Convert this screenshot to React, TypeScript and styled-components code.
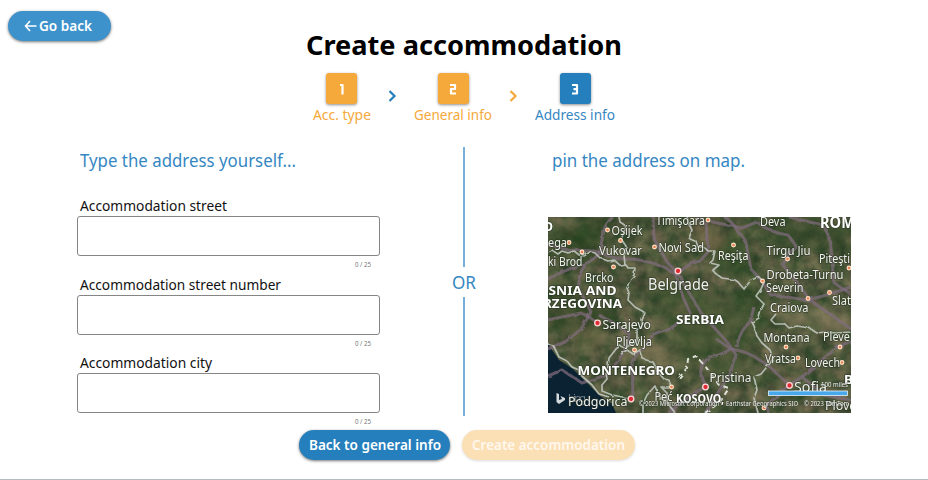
import React from 'react';
import styled, { createGlobalStyle } from 'styled-components';

const Global = createGlobalStyle`
  *{box-sizing:border-box}
  body{margin:0;background:#fff;font-family:"Noto Sans","Open Sans",sans-serif;overflow:hidden}
`;
const Page = styled.div`
  height:480px;display:flex;flex-direction:column;border-bottom:1px solid #b4bcc0;overflow:hidden;
`;
const TopBar = styled.div`height:28px;padding:11px 0 0 8px;flex:none;`;
const Pill = styled.button<{ $w: number; $bg: string; $fg?: string; $soft?: boolean }>`
  display:flex;align-items:center;justify-content:center;gap:2px;
  width:${p => p.$w}px;height:30px;border:0;border-radius:15px;padding:0;flex:none;
  background:${p => p.$bg};color:${p => p.$fg ?? '#fff'};
  font:600 13.5px "Noto Sans",sans-serif;white-space:nowrap;
  box-shadow:0 1px 3px rgba(0,0,0,${p => (p.$soft ? 0.14 : 0.55)});
`;
const BackContent = styled.span`display:flex;align-items:center;gap:2px;padding-right:4px;`;
const Fit = styled.svg<{ $w: number; $h: number }>`
  display:block;flex:none;width:${p => p.$w}px;height:${p => p.$h}px;overflow:visible;
`;
const Title = styled.h1`margin:0;height:34px;display:flex;justify-content:center;flex:none;`;
const Steps = styled.div`display:flex;height:52px;margin:11px 0 0 312px;flex:none;`;
const Step = styled.div<{ $w: number }>`
  width:${p => p.$w}px;display:flex;flex-direction:column;align-items:center;gap:1px;
`;
const StepBox = styled.div<{ $c: string }>`
  width:31px;height:31px;border-radius:3px;background:${p => p.$c};flex:none;
  display:flex;align-items:center;justify-content:center;padding-top:1px;
  box-shadow:0 1px 3px rgba(0,0,0,.45);
`;
const Arrow = styled.div<{ $w: number }>`
  width:${p => p.$w}px;height:45px;display:flex;align-items:center;justify-content:center;
`;
const Content = styled.main`display:flex;height:269px;margin-top:22px;flex:none;`;
const Form = styled.section`width:380px;padding-left:77px;`;
const Heading = styled.h2`margin:0;padding-left:3px;height:49px;`;
const Field = styled.div`height:78.7px;display:flex;flex-direction:column;`;
const Label = styled.label`height:20px;padding-left:3px;`;
const Input = styled.input`
  width:303px;height:40px;border:1px solid #858585;border-radius:3px;background:#fff;flex:none;
`;
const Counter = styled.span`align-self:flex-end;margin:4px 9px 0 0;`;
const Divider = styled.div`
  width:168px;display:flex;flex-direction:column;align-items:center;
`;
const Line = styled.i<{ $h: number }>`width:2px;height:${p => p.$h}px;background:#75aed8;flex:none;`;
const Or = styled.div`height:30px;display:flex;align-items:center;padding-top:2px;`;
const MapSide = styled.section`width:303px;`;
const MapHeading = styled.h2`margin:0;padding-left:4px;height:70px;`;
const Actions = styled.footer`display:flex;gap:12px;margin:14px 0 0 299px;`;

type LineProps = { t: string; w: number; h: number; base: number; size: number; color: string; weight?: number };
/* A single line of text fitted to a fixed advance width. */
const TextLine = ({ t, w, h, base, size, color, weight = 400 }: LineProps) => (
  <Fit $w={w} $h={h}>
    <text x="0" y={base} fontSize={size} fontWeight={weight} fill={color} textLength={w} lengthAdjust="spacingAndGlyphs">{t}</text>
  </Fit>
);

const blue = '#267fbd';
const textBlue = '#3587c2';
const orange = '#f5a93b';

type Place = [string, number, number, number, number, boolean?];
const places: Place[] = [
  ['Osijek', 63.5, 18, 31, 12], ['ega', 0, 30, 19, 12], ['Vukovar', 51, 37.5, 43, 12], ['ki Brod', 0, 48.5, 34.5, 12],
  ['Brcko', 37, 64.5, 28.5, 12], ['Timişoara', 108, 7.5, 49, 12], ['Novi Sad', 110.5, 35, 45.5, 12], ['Reşiţa', 170, 42.5, 30.5, 12],
  ['Belgrade', 100, 72.5, 61, 15.5], ['Deva', 212, 8.5, 25.5, 12], ['Tirgu Jiu', 218.5, 37.5, 44, 12], ['Piteşti', 271, 46, 31, 12],
  ['Drobeta-Turnu', 218.5, 62, 77, 12], ['Severin', 218, 75, 37.5, 12], ['Craiova', 222, 95, 38.5, 12], ['Slat', 284, 88, 19, 12],
  ['Sarajevo', 54.5, 111.5, 48.5, 12.5], ['Pljevlja', 68, 128.5, 36, 12], ['Podgorica', 20, 188.5, 59.5, 12.5], ['Peć', 106.5, 184, 18, 12.5],
  ['Montana', 215.5, 125, 46, 12], ['Pleve', 275, 124, 27, 12], ['Vratsa', 217, 146, 31, 12], ['Lovech', 257, 150, 35, 12],
  ['Pristina', 161.5, 165, 42, 12.5], ['Sofia', 246, 174.5, 33, 15], ['Plovd', 277, 193, 32, 12.5],
  ['D', -4, 14, 9, 13, true], ['SNIA AND', 0.5, 77.5, 68, 12.5, true], ['RZEGOVINA', -5, 91, 79, 12.5, true],
  ['ROM', 272, 11, 35, 15.5, true], ['SERBIA', 128, 106.5, 48, 12.5, true], ['MONTENEGRO', 29.5, 158, 97.5, 12.5, true],
  ['KOSOVO,', 128, 185.5, 48, 12, true], ['B', 296, 166.5, 9, 13, true],
];
const towns = [[59.5, 13], [72.5, 23.5], [21, 25.5], [34, 35], [65.5, 50], [106.5, 30], [160, 3], [185.5, 28], [239.5, 42], [301, 51], [214.5, 64], [260, 81.5], [281.5, 75.5], [86.5, 133], [123.5, 170], [238, 130], [292, 130], [250, 141], [294, 145.5], [216, 191]];
const cities = [[130, 54], [49.5, 106], [83, 182], [157.5, 170], [241.5, 168.5]];
const roads = [
  'M0 27L20 33L46 34L70 42Q85 41 101 45T122 54L133 60Q136 70 142 77L151 92Q156 102 164 108L180 126L188 138Q184 147 183 155L174 169L157 196',
  'M65 0Q57 7 56 14L51 37Q42 46 33 48T0 62', 'M105 0L106 22Q114 36 119 45L130 57Q140 46 152 44L160 35L158 7L149 0',
  'M176 0Q187 6 190 15Q199 22 199 32L203 52L213 63L223 78Q238 80 260 83Q281 78 303 70', 'M160 4L194 11L209 5Q222 16 240 18L248 29Q238 39 235 48L247 63L262 83L303 112',
  'M241 0L274 8Q283 17 283 32L286 66L303 77', 'M37 48Q29 59 31 72L43 95L33 112Q24 120 17 125L0 132', 'M51 98L67 107L81 117Q80 126 77 133L69 145Q64 153 58 158L34 166L14 153L0 159',
  'M183 132Q196 134 205 139T222 150L241 168L254 160Q266 149 275 142L290 130L303 124', 'M183 132Q171 139 161 140Q151 149 153 159L158 169L141 180L120 196',
  'M254 160L276 178L303 183', 'M241 168L218 189L220 196', 'M127 55Q131 68 135 80L142 96L126 109L106 117L94 133Q83 140 84 149L85 180',
  'M183 132L168 122M188 130Q193 112 202 105L206 90', 'M50 105L33 96L0 103',
];
const borders = [
  'M0 36L5 34L10 37L14 34L20 36L26 34L31 38L36 39L42 35L47 36L52 41L60 44L66 43L73 49L78 48L80 51L87 51L86 58L81 65L79 71L81 76L80 83L87 90L96 95L93 102L94 109L89 115L89 124L77 131L72 129L68 132L61 141L60 149L58 155L59 162L54 168L54 174L64 178L80 181',
  'M71 0L72 5L78 9L76 15L73 22L78 29L76 38L77 48', 'M139 0L141 7L144 13L141 21L148 24L150 30L156 30L160 34L167 34L165 43L162 46L171 48L165 53L167 56L174 61L181 62L187 63L190 65L196 72L203 63L211 60L216 65L213 72L208 79L216 87L213 93L211 101L204 105L206 109L209 119L214 126L222 133L225 141L223 145L213 157L206 160L209 173L206 181L210 196',
  'M0 127L5 128L11 140L19 144L24 150L31 153L34 159L44 168L51 177L61 180', 'M228 97L223 103L227 107L237 107L241 111L249 109L261 111L269 116L277 115L288 116L303 115',
  'M73 137L79 133L85 137L92 133L95 142L105 145L110 155L116 162L121 163L123 170L113 170L119 176L119 185L127 196', 'M95 196L95 187L99 178L107 169L112 182L120 182',
];

const SatelliteMap = () => (
  <Fit $w={303} $h={196} viewBox="0 0 303 196">
    <defs>
      <clipPath id="frame"><rect width="303" height="196" /></clipPath>
      <filter id="terrain" x="0" y="0" width="100%" height="100%" colorInterpolationFilters="sRGB">
        <feTurbulence type="fractalNoise" baseFrequency=".07" numOctaves="5" seed="8" />
        <feColorMatrix values=".42 .08 0 0 .065  .24 .14 0 0 .155  .24 .06 0 0 .085  0 0 0 0 1" />
      </filter>
      <filter id="soft"><feGaussianBlur stdDeviation="6" /></filter>
      <filter id="rough"><feTurbulence type="fractalNoise" baseFrequency=".12" numOctaves="3" seed="3" result="n" /><feDisplacementMap in="SourceGraphic" in2="n" scale="3" /></filter>
    </defs>
    <g clipPath="url(#frame)">
      <rect width="303" height="196" filter="url(#terrain)" />
      <g filter="url(#soft)" opacity=".5">
        <path d="M0 15L50 0L65 10L50 40L0 38Z" fill="#1e3d19" />
        <path d="M157 35L192 10L210 60L180 60Z" fill="#20491b" />
        <path d="M5 60L70 95L55 120L0 115Z" fill="#273f1e" />
        <path d="M210 0H303V30L225 35Z" fill="#294521" />
        <path d="M205 65L225 95L222 115L170 90Z" fill="#24461e" />
        <path d="M225 95L303 92V112L240 109Z" fill="#978a67" />
        <path d="M150 0L180 20L165 40L142 18Z" fill="#806a4c" />
        <path d="M85 118L133 140L115 150L90 140Z" fill="#a39068" />
        <path d="M20 100L55 115L50 135L25 125Z" fill="#6d6a45" />
        <path d="M100 60L210 90L195 165L130 145Z" fill="#41552f" />
      </g>
      <path d="M0 127L11 143L25 152L36 163L51 178L64 187L68 196H0Z" fill="#0b2232" />
      <g fill="none" strokeLinejoin="round" filter="url(#rough)">
        {roads.map(d => <path key={d} d={d} stroke="#7f6c7d" strokeWidth="3" opacity=".72" />)}
        {borders.map(d => <path key={d} d={d} stroke="#c4cbc4" strokeWidth="1.7" opacity=".85" />)}
        <path d="M131 161L139 151L140 142L148 139L157 149L171 168L181 171L172 185L157 196" stroke="#dce1d8" strokeWidth="2" strokeDasharray="5 4" />
      </g>
      {towns.map(([x, y]) => <circle key={`${x}-${y}`} cx={x} cy={y} r="1.9" fill="#e98254" stroke="#ffe4ca" strokeWidth="1.1" />)}
      {cities.map(([x, y]) => <circle key={`${x}-${y}`} cx={x} cy={y} r="2.8" fill="#e02b35" stroke="#ffd9d9" strokeWidth="1.3" />)}
      <path d="M8.500 176L11 177V183L14 182L12.500 179L17 181V183L11 187L8.500 185Z" fill="#d4d9dc" />
      <text x="20" y="185" fontSize="11" textLength="18" fill="#7d888d">bing</text>
      {places.map(([t, x, y, w, size, bold]) => (
        <text key={t} x={x} y={y} textLength={w} lengthAdjust="spacingAndGlyphs" fontSize={size} fontWeight={bold ? 700 : 400}
          fill={bold ? '#fff' : '#f0f2ee'} stroke="#26301f" strokeOpacity=".6" strokeWidth="1.6" strokeLinejoin="round" paintOrder="stroke">{t}</text>
      ))}
      <g fill="#f6f6f6" stroke="#202820" strokeOpacity=".4" strokeWidth=".8" paintOrder="stroke" fontSize="7">
        <text x="273" y="169.500" textLength="27" lengthAdjust="spacingAndGlyphs">100 miles</text>
        <text x="91" y="189" textLength="80" lengthAdjust="spacingAndGlyphs">© 2023 Microsoft Corporation</text>
        <text x="178" y="189" textLength="72" lengthAdjust="spacingAndGlyphs">Earthstar Geographics  SIO</text>
        <text x="256" y="189" textLength="45" lengthAdjust="spacingAndGlyphs">© 2023 TomTom</text>
      </g>
      <rect x="220.500" y="174" width="79" height="4.500" fill="#48a8ec" stroke="#e8f3fa" strokeWidth=".8" />
    </g>
  </Fit>
);

const Chevron = ({ color }: { color: string }) => (
  <svg width="9" height="12" viewBox="0 0 9 12"><path d="M1.500 1L6.500 6L1.500 11" fill="none" stroke={color} strokeWidth="2.200" /></svg>
);
const digits = ['M2 2H4.500V11.500', 'M1 2H6V6H2V10.500H7', 'M1 2H6V10.500H1M2.500 6.200H6'];
const Digit = ({ n }: { n: number }) => (
  <svg width="8" height="12" viewBox="0 0 8 12"><path d={digits[n]} fill="none" stroke="#fff" strokeWidth="2.200" strokeLinejoin="round" /></svg>
);

export default function App() {
  return (
    <Page>
      <Global />
      <TopBar>
        <Pill $w={103} $bg="#3e92cc">
          <BackContent>
            <svg width="13" height="12" viewBox="0 0 13 12"><path d="M12.500 6H1.500M6 1L1.500 6L6 11" fill="none" stroke="#fff" strokeWidth="1.500" /></svg>
            <TextLine t="Go back" w={53} h={18} base={14} size={13.5} weight={600} color="#fff" />
          </BackContent>
        </Pill>
      </TopBar>
      <Title><TextLine t="Create accommodation" w={316} h={34} base={26.5} size={27.5} weight={700} color="#000" /></Title>
      <Steps>
        <Step $w={59}><StepBox $c={orange}><Digit n={0} /></StepBox><TextLine t="Acc. type" w={58} h={20} base={15} size={14} color={orange} /></Step>
        <Arrow $w={43}><Chevron color={blue} /></Arrow>
        <Step $w={78}><StepBox $c={orange}><Digit n={1} /></StepBox><TextLine t="General info" w={78} h={20} base={15} size={14} color={orange} /></Step>
        <Arrow $w={43}><Chevron color={orange} /></Arrow>
        <Step $w={80}><StepBox $c={blue}><Digit n={2} /></StepBox><TextLine t="Address info" w={80} h={20} base={15} size={14} color={textBlue} /></Step>
      </Steps>
      <Content>
        <Form>
          <Heading><TextLine t="Type the address yourself..." w={216} h={25} base={19.5} size={17.5} color={textBlue} /></Heading>
          {([['Accommodation street', 147], ['Accommodation street number', 201], ['Accommodation city', 132]] as [string, number][]).map(([t, w]) => (
            <Field key={t}>
              <Label><TextLine t={t} w={w} h={20} base={15} size={14} color="#111" /></Label>
              <Input aria-label={t} />
              <Counter><TextLine t="0 / 25" w={16} h={8} base={6.5} size={6.2} color="#777" /></Counter>
            </Field>
          ))}
        </Form>
        <Divider>
          <Line $h={120} />
          <Or><TextLine t="OR" w={24} h={24} base={18} size={17.5} color={textBlue} /></Or>
          <Line $h={119} />
        </Divider>
        <MapSide>
          <MapHeading><TextLine t="pin the address on map." w={193} h={25} base={19.5} size={17.5} color={textBlue} /></MapHeading>
          <SatelliteMap />
        </MapSide>
      </Content>
      <Actions>
        <Pill $w={151} $bg={blue}><TextLine t="Back to general info" w={132} h={18} base={14} size={13.5} weight={600} color="#fff" /></Pill>
        <Pill $w={173} $bg="#fbdfb5" $soft><TextLine t="Create accommodation" w={153} h={18} base={14} size={13.5} weight={600} color="#fff8ee" /></Pill>
      </Actions>
    </Page>
  );
}
